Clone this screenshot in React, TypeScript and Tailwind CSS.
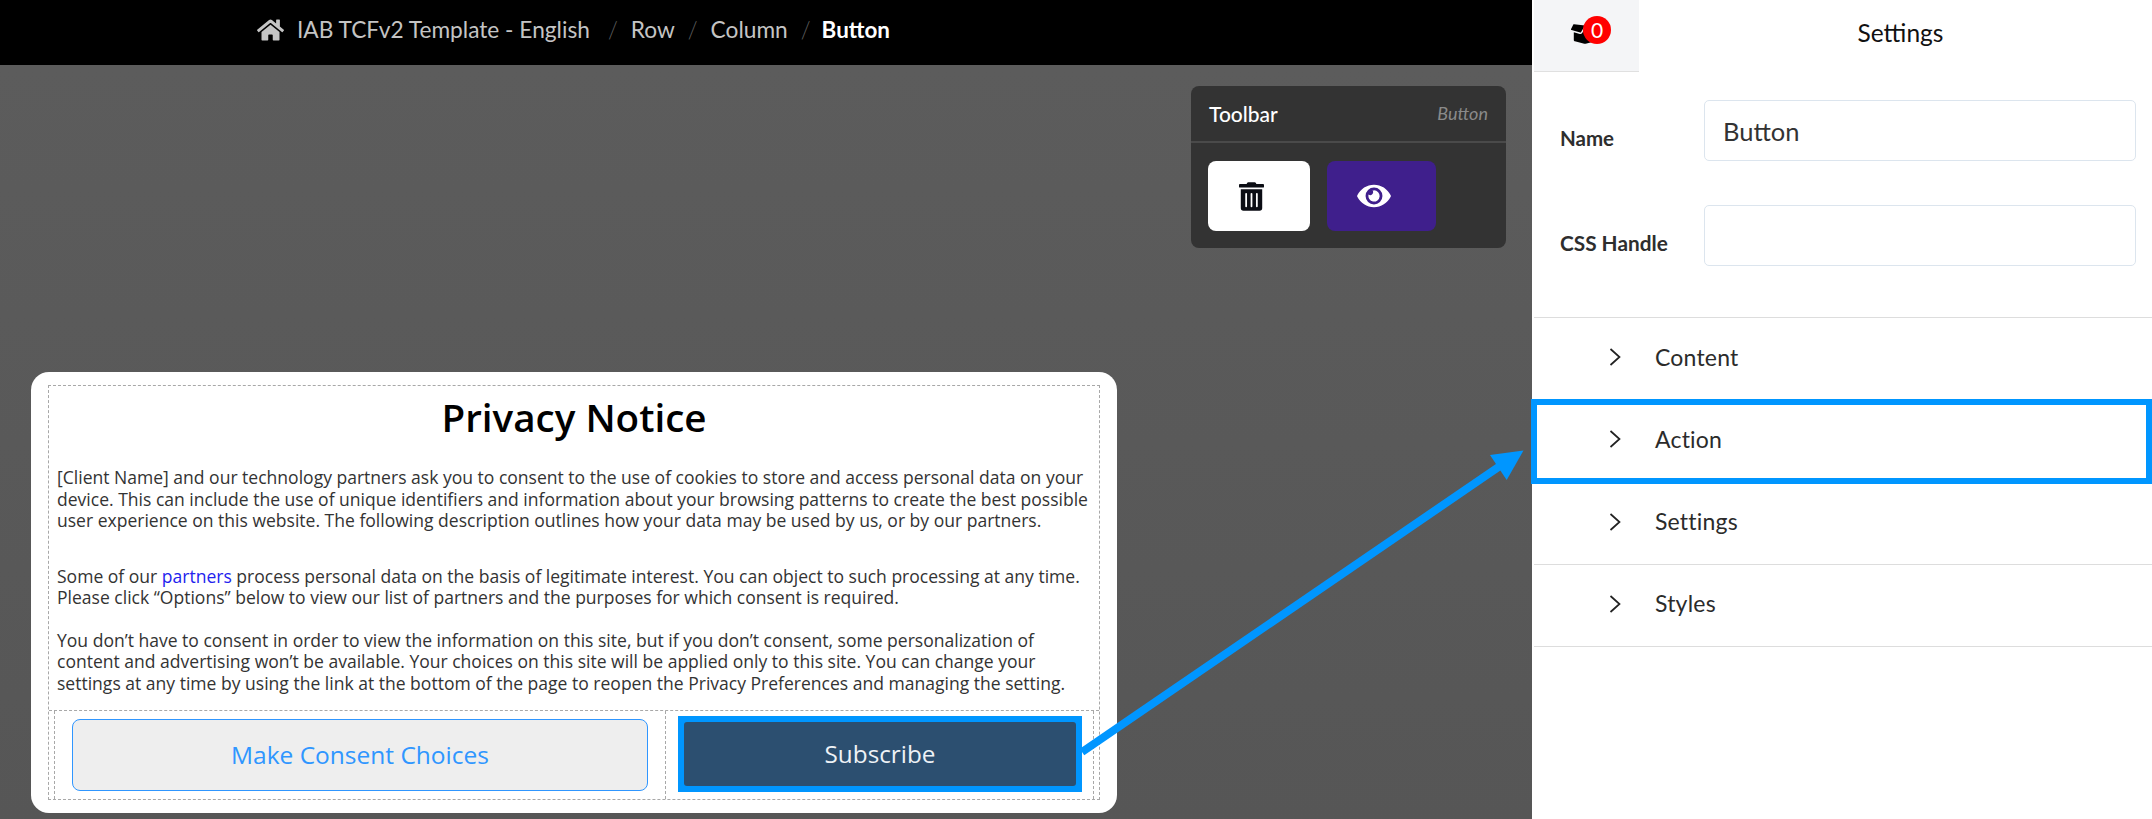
import { FaBoxOpen, FaEye, FaHome, FaTrashAlt } from "react-icons/fa";

function Crumb({ label }: { label: string }) {
  return (
    <>
      <span className="text-[#5c5c5c] font-light">/</span>
      <span className="text-[#c4c4c4]">{label}</span>
    </>
  );
}

function AccordionRow({ label, divider, className, children }: { label: string; divider?: boolean; className?: string; children?: React.ReactNode }) {
  return (
    <div className={`relative h-[82px] flex items-center pl-[75px] pb-[4px] ${divider ? "border-b border-[#dddddd]" : ""} ${className ?? ""}`}>
      <svg width="12" height="18" viewBox="0 0 12 18" fill="none" stroke="#222222" strokeWidth="1.7">
        <path d="M1.5 1 L10.5 9 L1.5 17" />
      </svg>
      <span className="ml-[34px] text-[23px] text-[#2b2b2b] tracking-[0.2px]">{label}</span>
      {children}
    </div>
  );
}

export default function App() {
  return (
    <div className="relative w-[2152px] h-[819px] overflow-hidden flex bg-white font-['Lato',sans-serif]">
      <div className="w-[1532px] flex flex-col">
        <header className="h-[65px] bg-black flex items-center pl-[257px] pb-[5px] text-[22.7px] shrink-0">
          <FaHome className="text-[#c4c4c4] w-[27px] h-[24px] mr-[13px]" />
          <div className="flex items-center gap-[13px]">
            <span className="text-[#c4c4c4] mr-[5px]">IAB TCFv2 Template - English</span>
            <Crumb label="Row" />
            <Crumb label="Column" />
            <span className="text-[#5c5c5c] font-light">/</span>
            <span className="text-white font-bold -ml-[2px] text-[22.4px]">Button</span>
          </div>
        </header>

        <main className="flex-1 flex flex-col bg-linear-to-b from-[#5c5c5c] to-[#565656] pt-[21px]">
          <section className="self-end mr-[26px] w-[315px] h-[162px] bg-[#333333] rounded-[8px]">
            <div className="h-[55px] flex items-center justify-between pl-[18px] pr-[18px]">
              <span className="text-white text-[21px] font-medium">Toolbar</span>
              <span className="text-[#8a8a8a] text-[18px] italic">Button</span>
            </div>
            <div className="border-t-2 border-[#4a4a4a] pt-[18px] pl-[17px] flex gap-[17px]">
              <button className="w-[102px] h-[70px] bg-white rounded-[8px] flex items-center justify-center pr-[16px]">
                <FaTrashAlt className="w-[25px] h-[29px] text-[#0b0d14]" />
              </button>
              <button className="w-[109px] h-[70px] bg-[#3f1f8c] rounded-[8px] flex items-center justify-center pr-[15px]">
                <FaEye className="w-[34px] h-[30px] text-white" />
              </button>
            </div>
          </section>

          <section className="ml-[31px] mt-[124px] w-[1086px] h-[441px] bg-white rounded-[18px] pt-[13px] px-[17px] font-['Open_Sans',sans-serif]">
            <div className="h-[415px] border border-dashed border-[#a8a8a8] flex flex-col">
              <h1 className="h-[64px] flex items-center justify-center text-[38.6px] font-semibold text-black">Privacy Notice</h1>
              <div className="mt-[17px] px-[8px] text-[17.55px] leading-[21.5px] text-[#333333]">
                <p>
                  [Client Name] and our technology partners ask you to consent to the use of cookies to store and access personal data on your
                  device. This can include the use of unique identifiers and information about your browsing patterns to create the best possible
                  user experience on this website. The following description outlines how your data may be used by us, or by our partners.
                </p>
                <p className="mt-[34px]">
                  Some of our <a className="text-[#2222ee]">partners</a> process personal data on the basis of legitimate interest. You can object to such processing at any time.
                  Please click “Options” below to view our list of partners and the purposes for which consent is required.
                </p>
                <p className="mt-[21px]">
                  You don’t have to consent in order to view the information on this site, but if you don’t consent, some personalization of
                  content and advertising won’t be available. Your choices on this site will be applied only to this site. You can change your
                  settings at any time by using the link at the bottom of the page to reopen the Privacy Preferences and managing the setting.
                </p>
              </div>
              <div className="mt-auto h-[89px] border-t border-dashed border-[#a8a8a8] px-[5px] flex">
                <div className="w-[612px] border-x border-dashed border-[#a8a8a8] px-[17px] pt-[8px]">
                  <button className="w-full h-[72px] bg-[#eeeeee] border border-[#2f96ff] rounded-[8px] text-[24.5px] text-[#2f96ff]">Make Consent Choices</button>
                </div>
                <div className="flex-1 border-r border-dashed border-[#a8a8a8] pl-[12px] pr-[11px] pt-[5px]">
                  <div className="h-[76px] border-[6px] border-[#0096ff] bg-[#0096ff]">
                    <button className="w-full h-full bg-[#2c4f70] rounded-[3px] text-[24.3px] text-[#eef2f6]">Subscribe</button>
                  </div>
                </div>
              </div>
            </div>
          </section>
        </main>
      </div>

      <aside className="w-[620px] flex flex-col">
        <div className="h-[72px] flex pl-[2px]">
          <div className="relative w-[105px] bg-[#f4f5f7] border-b border-[#e0e0e0]">
            <FaBoxOpen className="absolute left-[37px] top-[22px] w-[28px] h-[24px] text-black" />
            <span className="absolute left-[49px] top-[16px] w-[28px] h-[28px] rounded-full bg-[#ff0000] text-white text-[21px] flex items-center justify-center">0</span>
          </div>
          <div className="flex-1 flex items-center justify-center pl-[10px] pb-[6px] text-[24.5px] text-[#111111]">Settings</div>
        </div>

        <div className="ml-[2px] pl-[26px] pr-[16px] pt-[28px] pb-[51px] border-b border-[#dddddd] flex flex-col gap-[44px]">
          <div className="flex">
            <label className="w-[144px] self-center mt-[15px] text-[20.5px] font-bold text-[#2e2e2e]">Name</label>
            <input readOnly value="Button" className="w-[432px] h-[61px] border border-[#dce5ee] rounded-[5px] pl-[18px] text-[25.5px] text-[#333333] bg-white outline-none" />
          </div>
          <div className="flex">
            <label className="w-[144px] self-center mt-[15px] text-[20.8px] font-bold text-[#2e2e2e]">CSS Handle</label>
            <input readOnly value="" className="w-[432px] h-[61px] border border-[#dce5ee] rounded-[5px] bg-white outline-none" />
          </div>
        </div>

        <div className="ml-[2px]">
          <AccordionRow label="Content" />
          <AccordionRow label="Action">
            <div className="absolute -left-[3px] right-0 -top-[1px] -bottom-[2px] border-[6px] border-[#0096ff]" />
          </AccordionRow>
          <AccordionRow label="Settings" divider className="mt-[1px]" />
          <AccordionRow label="Styles" divider />
        </div>
      </aside>

      <svg className="absolute inset-0 pointer-events-none" width="2152" height="819" viewBox="0 0 2152 819" fill="none">
        <line x1="1082" y1="752" x2="1500" y2="466" stroke="#0096ff" strokeWidth="8" />
        <polygon points="1523.5,450.5 1490,455 1506.7,480" fill="#0096ff" />
      </svg>
    </div>
  );
}
